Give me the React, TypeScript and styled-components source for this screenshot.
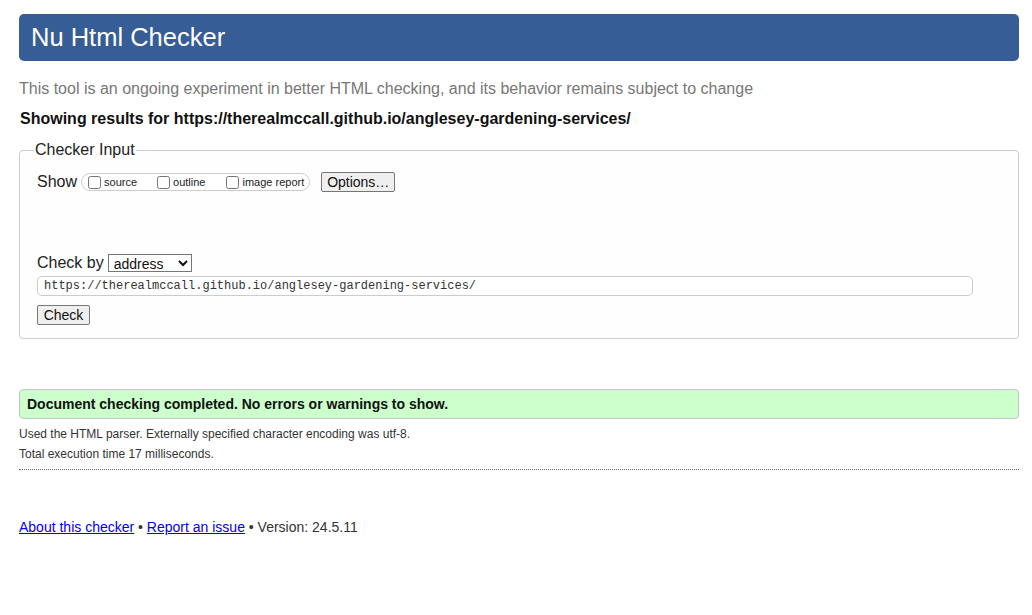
import React from "react";
import styled, { createGlobalStyle } from "styled-components";

const Global = createGlobalStyle`
  html, body { margin: 0; padding: 0; background: #fff; }
  body { font-family: "Liberation Sans", Arial, sans-serif; color: #222; }
  * { box-sizing: border-box; }
`;

const Page = styled.div`
  width: 1000px;
  margin-left: 19px;
  padding-top: 14px;
`;

const Title = styled.h1`
  margin: 0;
  height: 47px;
  background: #365d95;
  color: #fff;
  border-radius: 5px;
  padding-left: 12px;
  display: flex;
  align-items: center;
  font-size: 25.5px;
  font-weight: normal;
`;

const Intro = styled.p`
  margin: 19px 0 0;
  font-size: 16px;
  line-height: 18px;
  color: #777;
`;

const Results = styled.p`
  margin: 12px 0 0 1px;
  font-size: 16px;
  line-height: 18px;
  font-weight: bold;
  color: #111;
`;

const Fieldset = styled.fieldset`
  margin: 12px 0 0;
  padding: 0 17px 13px;
  border: 1px solid #ccc;
  border-radius: 4px;
  min-width: 0;
  background: #fefefe;
`;

const Legend = styled.legend`
  font-size: 16px;
  line-height: 20px;
  padding: 0 1px;
  margin-left: -3px;
  color: #222;
`;

const Row = styled.div<{ $top: number }>`
  display: flex;
  align-items: center;
  height: 20px;
  margin-top: ${(p) => p.$top}px;
  font-size: 16px;
  color: #222;
`;

const Group = styled.span`
  display: inline-flex;
  align-items: center;
  height: 18px;
  margin-left: 4px;
  padding: 0 5px 0 6px;
  border: 1px solid #ccc;
  border-radius: 9px;
  background: #fff;
`;

const Opt = styled.label<{ $gap: number }>`
  display: inline-flex;
  align-items: center;
  font-size: 11px;
  margin-right: ${(p) => p.$gap}px;
  color: #222;
`;

const Box = styled.input`
  width: 13px;
  height: 13px;
  margin: 0 3px 0 0;
`;

const Btn = styled.button<{ $ml?: number; $w: number }>`
  height: 20px;
  width: ${(p) => p.$w}px;
  margin-left: ${(p) => p.$ml ?? 0}px;
  padding: 0;
  font-family: "Liberation Sans", Arial, sans-serif;
  font-size: 14px;
  color: #111;
  background: #efefef;
  border: 1px solid #767676;
  border-radius: 2px;
`;

const Select = styled.select`
  margin-left: 4px;
  width: 84px;
  height: 18px;
  font-family: "Liberation Sans", Arial, sans-serif;
  font-size: 14px;
  color: #111;
  background: #fff;
  border: 1px solid #767676;
  border-radius: 0;
  padding: 0 0 0 1px;
`;

const Url = styled.input`
  display: block;
  margin-top: 3px;
  width: 936px;
  height: 20px;
  padding: 0 6px;
  border: 1px solid #ccc;
  border-radius: 5px;
  background: #fff;
  font-family: "Liberation Mono", "DejaVu Sans Mono", monospace;
  font-size: 12px;
  color: #333;
  outline: none;
`;

const BtnRow = styled.div`
  margin-top: 9px;
  height: 20px;
  display: flex;
`;

const Success = styled.div`
  margin-top: 50px;
  height: 30px;
  display: flex;
  align-items: center;
  padding-left: 7px;
  background: #ccffcc;
  border: 1px solid #c4c4c4;
  border-radius: 4px;
  font-size: 14px;
  font-weight: bold;
  color: #111;
`;

const Note = styled.p<{ $top: number }>`
  margin: ${(p) => p.$top}px 0 0;
  font-size: 12px;
  line-height: 20px;
  color: #333;
`;

const Rule = styled.hr`
  margin: 5px 0 0;
  border: 0;
  border-top: 1px dotted #666;
  height: 0;
`;

const Footer = styled.p`
  margin: 47px 0 0;
  font-size: 14px;
  line-height: 20px;
  color: #333;
`;

const Link = styled.a`
  color: #0000ee;
  text-decoration: underline;
`;

export default function App() {
  return (
    <>
      <Global />
      <Page>
        <Title>Nu Html Checker</Title>
        <Intro>
          This tool is an ongoing experiment in better HTML checking, and its behavior remains subject to change
        </Intro>
        <Results>Showing results for https://therealmccall.github.io/anglesey-gardening-services/</Results>
        <Fieldset>
          <Legend>Checker Input</Legend>
          <Row $top={12}>
            Show
            <Group>
              <Opt $gap={20}>
                <Box type="checkbox" />
                source
              </Opt>
              <Opt $gap={21}>
                <Box type="checkbox" />
                outline
              </Opt>
              <Opt $gap={0}>
                <Box type="checkbox" />
                image report
              </Opt>
            </Group>
            <Btn $ml={11} $w={74}>Options…</Btn>
          </Row>
          <Row $top={61}>
            Check by
            <Select defaultValue="address">
              <option value="address">address</option>
              <option value="file">file upload</option>
              <option value="text">text input</option>
            </Select>
          </Row>
          <Url readOnly value="https://therealmccall.github.io/anglesey-gardening-services/" />
          <BtnRow>
            <Btn $w={53}>Check</Btn>
          </BtnRow>
        </Fieldset>
        <Success>Document checking completed. No errors or warnings to show.</Success>
        <Note $top={5}>Used the HTML parser. Externally specified character encoding was utf-8.</Note>
        <Note $top={0}>Total execution time 17 milliseconds.</Note>
        <Rule />
        <Footer>
          <Link href="#">About this checker</Link> • <Link href="#">Report an issue</Link> • Version: 24.5.11
        </Footer>
      </Page>
    </>
  );
}
